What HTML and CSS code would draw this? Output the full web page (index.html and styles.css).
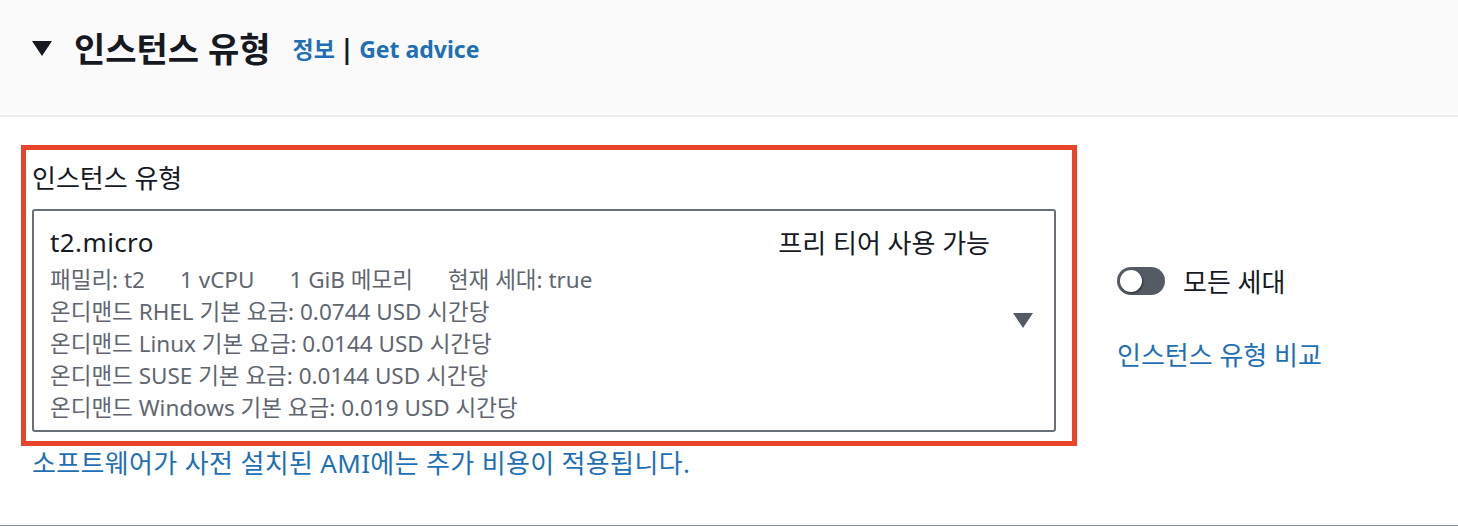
FILE: index.html
```html
<!DOCTYPE html>
<html lang="ko">
<head>
<meta charset="utf-8">
<link rel="stylesheet" href="styles.css">
</head>
<body>
<div class="header">
  <span class="expand"></span>
  <h2 class="title">인스턴스 유형</h2>
  <a class="info">정보</a>
  <span class="sep">|</span>
  <a class="info">Get advice</a>
</div>
<div class="content">
  <div class="field-col">
    <div class="redbox">
      <div class="label">인스턴스 유형</div>
      <div class="select">
        <div class="opt">
          <div class="opt-top">
            <span class="name">t2.micro</span>
            <span class="tag">프리 티어 사용 가능</span>
          </div>
          <div class="details">
            <div class="row"><span>패밀리: t2</span><span>1 vCPU</span><span>1 GiB 메모리</span><span>현재 세대: true</span></div>
            <div>온디맨드 RHEL 기본 요금: 0.0744 USD 시간당</div>
            <div>온디맨드 Linux 기본 요금: 0.0144 USD 시간당</div>
            <div>온디맨드 SUSE 기본 요금: 0.0144 USD 시간당</div>
            <div>온디맨드 Windows 기본 요금: 0.019 USD 시간당</div>
          </div>
        </div>
        <span class="caret"></span>
      </div>
    </div>
    <a class="note">소프트웨어가 사전 설치된 AMI에는 추가 비용이 적용됩니다.</a>
  </div>
  <div class="side">
    <div class="toggle-row">
      <span class="toggle"><span class="knob"></span></span>
      <span class="toggle-label">모든 세대</span>
    </div>
    <a class="compare">인스턴스 유형 비교</a>
  </div>
</div>
</body>
</html>
```
FILE: styles.css
```css
* { box-sizing: border-box; }
body {
  margin: 0;
  background: #ffffff;
  font-family: "Noto Sans", "Noto Sans CJK KR", sans-serif;
  color: #16191f;
}
a { text-decoration: none; }

.header {
  height: 117px;
  background: #fafafa;
  border-bottom: 2px solid #eaeded;
  display: flex;
  align-items: center;
  padding: 0 0 18px 32px;
}
.expand {
  width: 0; height: 0;
  border-left: 10px solid transparent;
  border-right: 10px solid transparent;
  border-top: 15px solid #16191f;
  margin-right: 22px;
}
.title {
  margin: 0;
  font-size: 34px;
  font-weight: 700;
  line-height: 40px;
  margin-right: 22px;
}
.info {
  color: #1f6fb5;
  font-weight: 700;
  font-size: 23px;
  line-height: 40px;
}
.sep {
  font-size: 26px;
  font-weight: 700;
  line-height: 40px;
  margin: 0 5px 0 5px;
  color: #16191f;
}

.content {
  display: flex;
  align-items: flex-start;
  padding: 28px 0 0 21px;
  height: 409px;
  border-bottom: 1px solid #879596;
}
.field-col { width: 1056px; }
.redbox {
  border: 5px solid #e8432b;
  padding: 12px 16px 9px 6px;
}
.label {
  font-size: 26px;
  line-height: 32px;
  margin-bottom: 15px;
}
.select {
  border: 2px solid #687078;
  border-radius: 3px;
  display: flex;
  align-items: center;
  padding: 16px 0 6px 16px;
}
.opt { flex: 1; }
.opt-top {
  display: flex;
  justify-content: space-between;
  align-items: center;
  height: 30px;
  margin-bottom: 7px;
}
.name { font-size: 26px; letter-spacing: 0.4px; }
.tag { font-size: 26px; }
.details {
  font-size: 22.5px;
  line-height: 32px;
  color: #5f6670;
  white-space: nowrap;
}
.row { display: flex; gap: 35px; }
.caret {
  width: 0; height: 0;
  border-left: 10px solid transparent;
  border-right: 10px solid transparent;
  border-top: 15px solid #545b64;
  margin: 0 21px 0 23px;
  position: relative;
  top: -5px;
}
.note {
  display: block;
  color: #1f6fb5;
  font-size: 26px;
  letter-spacing: 0.35px;
  line-height: 32px;
  padding: 1px 0 0 11px;
}

.side {
  margin-left: 40px;
  padding-top: 121px;
  display: flex;
  flex-direction: column;
}
.toggle-row {
  display: flex;
  align-items: center;
  height: 30px;
}
.toggle {
  width: 48px;
  height: 28px;
  border-radius: 14px;
  background: #545b64;
  display: flex;
  align-items: center;
  padding-left: 3px;
  margin-right: 18px;
}
.knob {
  width: 22px;
  height: 22px;
  border-radius: 50%;
  background: #fff;
  box-shadow: 1px 1px 2px rgba(0,0,0,0.5);
}
.toggle-label { font-size: 26px; }
.compare {
  color: #1f6fb5;
  font-size: 26px;
  line-height: 32px;
  margin-top: 43px;
}
```
